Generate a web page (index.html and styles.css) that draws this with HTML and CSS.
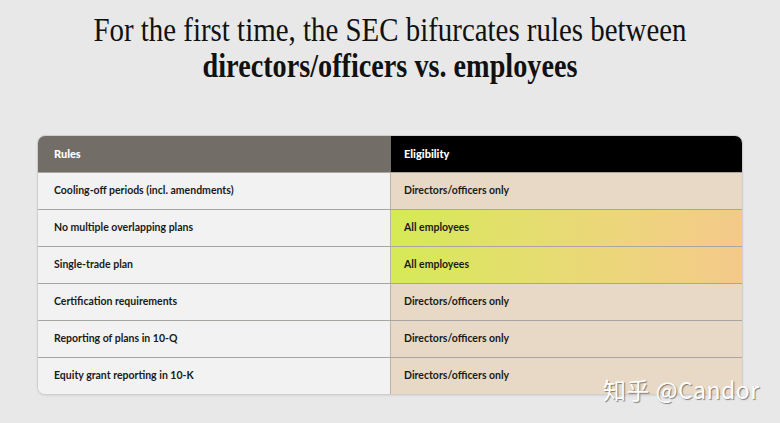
FILE: index.html
```html
<!DOCTYPE html>
<html>
<head>
<meta charset="utf-8">
<link rel="stylesheet" href="styles.css">
</head>
<body>
<div class="page">
  <h1 class="title">
    <span class="line1">For the first time, the SEC bifurcates rules between</span>
    <span class="line2">directors/officers vs. employees</span>
  </h1>
  <div class="table">
    <div class="row head">
      <div class="cell left">Rules</div>
      <div class="cell right">Eligibility</div>
    </div>
    <div class="row">
      <div class="cell left">Cooling-off periods (incl. amendments)</div>
      <div class="cell right">Directors/officers only</div>
    </div>
    <div class="row">
      <div class="cell left">No multiple overlapping plans</div>
      <div class="cell right hot">All employees</div>
    </div>
    <div class="row">
      <div class="cell left">Single-trade plan</div>
      <div class="cell right hot">All employees</div>
    </div>
    <div class="row">
      <div class="cell left">Certification requirements</div>
      <div class="cell right">Directors/officers only</div>
    </div>
    <div class="row">
      <div class="cell left">Reporting of plans in 10-Q</div>
      <div class="cell right">Directors/officers only</div>
    </div>
    <div class="row last">
      <div class="cell left">Equity grant reporting in 10-K</div>
      <div class="cell right">Directors/officers only</div>
    </div>
    <div class="watermark">知乎 @Candor</div>
  </div>
</div>
</body>
</html>
```
FILE: styles.css
```css
html, body {
  margin: 0;
  padding: 0;
  background: #e8e8e8;
}
.page {
  width: 780px;
  height: 423px;
  overflow: hidden;
  padding-top: 12px;
  box-sizing: border-box;
}
.title {
  margin: 0;
  text-align: center;
  font-family: "Liberation Serif", serif;
  font-size: 34px;
  line-height: 36px;
  font-weight: normal;
  color: #111;
}
.title span { display: block; }
.title .line1 { transform: scaleX(0.85); }
.title .line2 { font-weight: bold; transform: scaleX(0.83); }
.table {
  position: relative;
  margin: 51px 0 0 37px;
  width: 704px;
  border: 1px solid #cfcfcf;
  border-radius: 8px;
  font-family: "Lato", "Noto Sans", sans-serif;
  font-size: 10.5px;
  font-weight: bold;
  color: #1a1a1a;
  box-shadow: 0 1px 2px rgba(0,0,0,0.08);
}
.row {
  display: grid;
  grid-template-columns: 353px 1fr;
  height: 37px;
  border-top: 1px solid #a9a6a2;
  box-sizing: border-box;
}
.row.head {
  height: 36px;
  border-top: none;
  font-size: 11px;
  font-weight: 900;
  color: #fff;
}
.cell {
  display: flex;
  align-items: center;
  padding-bottom: 2px;
}
.cell.left {
  padding-left: 16px;
  background: #f2f2f2;
  border-right: 1px solid #bdb3a6;
}
.cell.right {
  padding-left: 13px;
  background: #e8d9c6;
}
.head .cell.left {
  background: #736d67;
  border-radius: 7px 0 0 0;
  border-right: none;
}
.head .cell.right {
  background: #000;
  border-radius: 0 7px 0 0;
}
.last .cell.left { border-radius: 0 0 0 7px; }
.last .cell.right { border-radius: 0 0 7px 0; }
.cell.hot {
  background: linear-gradient(90deg, #d5ea55 0%, #e3df6d 35%, #eed47e 70%, #f4c98a 100%);
}
.watermark {
  position: absolute;
  left: 565px;
  top: 236px;
  font-family: "Noto Sans CJK SC", "Noto Sans", sans-serif;
  font-size: 23px;
  font-weight: normal;
  color: #fff;
  letter-spacing: 0.5px;
  text-shadow: 1px 1px 1px rgba(0,0,0,0.45);
  white-space: nowrap;
}
```
